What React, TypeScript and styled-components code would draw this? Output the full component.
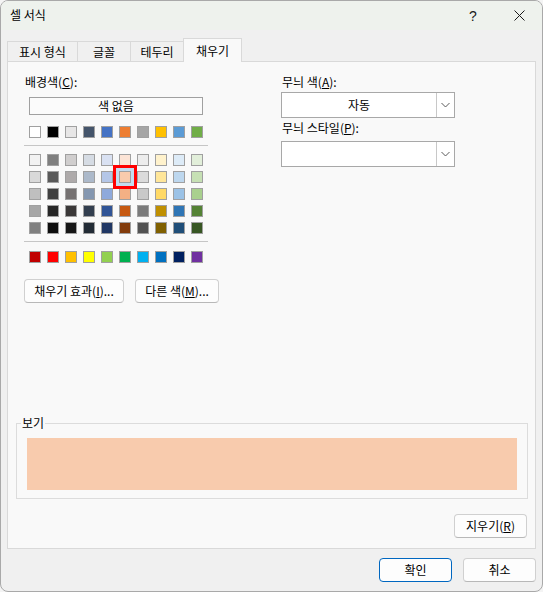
import React from "react";
import styled, { createGlobalStyle } from "styled-components";

const GlobalStyle = createGlobalStyle`
  html, body { margin: 0; padding: 0; background: #f4f4f4; }
  * { box-sizing: border-box; }
  body { font-family: "Noto Sans CJK KR", "Noto Sans", sans-serif; font-size: 12px; color: #000; }
`;

const Window = styled.div`
  width: 543px;
  height: 592px;
  border: 1px solid #a9a9a9;
  border-radius: 8px;
  overflow: hidden;
  background: #f0f0f0;
  display: flex;
  flex-direction: column;
`;

const TitleBar = styled.div`
  height: 29px;
  flex: none;
  display: flex;
  align-items: center;
  background: #eef2ed;
  padding-left: 9px;
`;

const Title = styled.div`
  flex: 1;
  font-size: 12px;
  line-height: 16px;
  padding-bottom: 1px;
`;

const CaptionButton = styled.div`
  width: 46px;
  height: 29px;
  display: flex;
  align-items: center;
  justify-content: center;
  font-family: "Liberation Sans", sans-serif;
  font-size: 14px;
  color: #1a1a1a;
`;

const Body = styled.div`
  flex: 1;
  display: flex;
  flex-direction: column;
  padding: 8px 6px 0 6px;
  min-height: 0;
`;

const TabStrip = styled.div`
  display: flex;
  align-items: flex-end;
  height: 24px;
  margin-bottom: -1px;
  position: relative;
  z-index: 1;
  flex: none;
`;

const Tab = styled.div<{ $w: number; $active?: boolean }>`
  width: ${(p) => p.$w}px;
  height: ${(p) => (p.$active ? 24 : 20)}px;
  margin-bottom: ${(p) => (p.$active ? 0 : 1)}px;
  margin-left: -1px;
  &:first-child { margin-left: 0; }
  border: 1px solid #d9d9d9;
  border-bottom: none;
  background: ${(p) => (p.$active ? "#f9f9f9" : "#f0f0f0")};
  position: relative;
  z-index: ${(p) => (p.$active ? 2 : 1)};
  display: flex;
  align-items: ${(p) => (p.$active ? "flex-start" : "center")};
  padding-top: ${(p) => (p.$active ? 4 : 0)}px;
  justify-content: center;
  font-size: 12px;
  line-height: 16px;
`;

const Panel = styled.div`
  flex: 1;
  background: #f9f9f9;
  border: 1px solid #d9d9d9;
  display: flex;
  flex-direction: column;
  padding: 12px 7px 10px 8px;
`;

const TopSection = styled.div`
  display: flex;
  gap: 73px;
  padding-left: 8px;
`;

const LeftColumn = styled.div`
  width: 184px;
  display: flex;
  flex-direction: column;
`;

const RightColumn = styled.div`
  width: 174px;
  display: flex;
  flex-direction: column;
`;

const Label = styled.div<{ $mt?: number }>`
  font-size: 12px;
  line-height: 16px;
  margin-top: ${(p) => p.$mt ?? 0}px;
  padding-left: 1px;
`;

const NoColorButton = styled.div`
  margin-top: 7px;
  margin-left: 5px;
  width: 174px;
  height: 18px;
  border: 1px solid #a0a0a0;
  background: #fbfbfb;
  display: flex;
  align-items: center;
  justify-content: center;
  font-size: 12px;
  line-height: 16px;
`;

const SwatchGrid = styled.div<{ $mt: number }>`
  margin-top: ${(p) => p.$mt}px;
  margin-left: 5px;
  display: grid;
  grid-template-columns: repeat(10, 12px);
  grid-auto-rows: 12px;
  column-gap: 6px;
  row-gap: 5px;
`;

const Swatch = styled.div<{ $color: string; $selected?: boolean }>`
  width: 12px;
  height: 12px;
  border: 1px solid #a0a0a0;
  background: ${(p) => p.$color};
  position: relative;
  z-index: ${(p) => (p.$selected ? 1 : 0)};
  box-shadow: ${(p) =>
    p.$selected ? "0 0 0 3px #c4dcf0, 0 0 0 6px #ff0000" : "none"};
`;

const Separator = styled.div<{ $mt: number }>`
  margin-top: ${(p) => p.$mt}px;
  height: 1px;
  background: #c6c6c6;
`;

const ButtonRow = styled.div`
  margin-top: 16px;
  display: flex;
  gap: 11px;
`;

const ActionButton = styled.div<{ $w: number; $primary?: boolean }>`
  width: ${(p) => p.$w}px;
  height: 24px;
  border: 1px solid ${(p) => (p.$primary ? "#0067c0" : "#d0d0d0")};
  border-bottom-color: ${(p) => (p.$primary ? "#0067c0" : "#b8b8b8")};
  border-radius: 4px;
  background: #fdfdfd;
  display: flex;
  align-items: center;
  justify-content: center;
  font-size: 12px;
  line-height: 16px;
  flex: none;
`;

const Select = styled.div<{ $mt: number }>`
  margin-top: ${(p) => p.$mt}px;
  height: 26px;
  border: 1px solid #a8a8a8;
  background: #ffffff;
  display: flex;
  align-items: stretch;
`;

const SelectValue = styled.div`
  flex: 1;
  display: flex;
  align-items: center;
  justify-content: center;
  font-size: 12px;
  line-height: 16px;
`;

const SelectArrow = styled.div`
  width: 18px;
  border-left: 1px solid #c8c8c8;
  display: flex;
  align-items: center;
  justify-content: center;
`;

const Preview = styled.fieldset`
  margin: auto 0 0 0;
  border: 1px solid #dcdcdc;
  padding: 7px 10px 8px 10px;
  min-width: 0;
`;

const PreviewLegend = styled.legend`
  font-size: 12px;
  line-height: 16px;
  padding: 0 1px;
  margin-left: -6px;
`;

const PreviewFill = styled.div<{ $color: string }>`
  height: 52px;
  background: ${(p) => p.$color};
`;

const ClearRow = styled.div`
  margin-top: 15px;
  display: flex;
  justify-content: flex-end;
  padding-right: 1px;
`;

const Footer = styled.div`
  height: 42px;
  flex: none;
  display: flex;
  justify-content: flex-end;
  align-items: flex-start;
  padding-top: 9px;
  gap: 11px;
`;

const themeRow = ["#FFFFFF", "#000000", "#E7E6E6", "#44546A", "#4472C4", "#ED7D31", "#A5A5A5", "#FFC000", "#5B9BD5", "#70AD47"];
const tints = [
  ["#F2F2F2", "#7F7F7F", "#D0CECE", "#D6DCE4", "#D9E1F2", "#FCE4D6", "#EDEDED", "#FFF2CC", "#DDEBF7", "#E2EFDA"],
  ["#D9D9D9", "#595959", "#AEAAAA", "#ACB9CA", "#B4C6E7", "#F8CBAD", "#DBDBDB", "#FFE699", "#BDD7EE", "#C6E0B4"],
  ["#BFBFBF", "#404040", "#757171", "#8497B0", "#8EA9DB", "#F4B084", "#C9C9C9", "#FFD966", "#9BC2E6", "#A9D08E"],
  ["#A6A6A6", "#262626", "#3A3838", "#333F4F", "#305496", "#C65911", "#7B7B7B", "#BF8F00", "#2F75B5", "#548235"],
  ["#808080", "#0D0D0D", "#161616", "#222B35", "#203764", "#833C0C", "#525252", "#806000", "#1F4E78", "#375623"],
];
const standard = ["#C00000", "#FF0000", "#FFC000", "#FFFF00", "#92D050", "#00B050", "#00B0F0", "#0070C0", "#002060", "#7030A0"];

const Chevron = () => (
  <svg width="9" height="6" viewBox="0 0 9 6">
    <path d="M0.5 1 L4.5 5 L8.5 1" fill="none" stroke="#5a5a5a" strokeWidth="1" />
  </svg>
);

const CloseIcon = () => (
  <svg width="11" height="11" viewBox="0 0 11 11">
    <path d="M0.5 0.5 L10.5 10.5 M10.5 0.5 L0.5 10.5" stroke="#1a1a1a" strokeWidth="1" />
  </svg>
);

export default function App() {
  return (
    <>
      <GlobalStyle />
      <Window>
        <TitleBar>
          <Title>셀 서식</Title>
          <CaptionButton>?</CaptionButton>
          <CaptionButton>
            <CloseIcon />
          </CaptionButton>
        </TitleBar>
        <Body>
          <TabStrip>
            <Tab $w={71}>표시 형식</Tab>
            <Tab $w={54}>글꼴</Tab>
            <Tab $w={54}>테두리</Tab>
            <Tab $w={59} $active>채우기</Tab>
          </TabStrip>
          <Panel>
            <TopSection>
              <LeftColumn>
                <Label>
                  배경색(<u>C</u>):
                </Label>
                <NoColorButton>색 없음</NoColorButton>
                <SwatchGrid $mt={11}>
                  {themeRow.map((c, i) => (
                    <Swatch key={i} $color={c} />
                  ))}
                </SwatchGrid>
                <Separator $mt={7} />
                <SwatchGrid $mt={8}>
                  {tints.flatMap((row, r) =>
                    row.map((c, i) => (
                      <Swatch key={`${r}-${i}`} $color={c} $selected={r === 1 && i === 5} />
                    ))
                  )}
                </SwatchGrid>
                <Separator $mt={7} />
                <SwatchGrid $mt={9}>
                  {standard.map((c, i) => (
                    <Swatch key={i} $color={c} />
                  ))}
                </SwatchGrid>
                <ButtonRow>
                  <ActionButton $w={100}>
                    채우기 효과(<u>I</u>)...
                  </ActionButton>
                  <ActionButton $w={84}>
                    다른 색(<u>M</u>)...
                  </ActionButton>
                </ButtonRow>
              </LeftColumn>
              <RightColumn>
                <Label>
                  무늬 색(<u>A</u>):
                </Label>
                <Select $mt={2}>
                  <SelectValue>자동</SelectValue>
                  <SelectArrow>
                    <Chevron />
                  </SelectArrow>
                </Select>
                <Label $mt={2}>
                  무늬 스타일(<u>P</u>):
                </Label>
                <Select $mt={5}>
                  <SelectValue />
                  <SelectArrow>
                    <Chevron />
                  </SelectArrow>
                </Select>
              </RightColumn>
            </TopSection>
            <Preview>
              <PreviewLegend>보기</PreviewLegend>
              <PreviewFill $color="#F8CBAD" />
            </Preview>
            <ClearRow>
              <ActionButton $w={73}>
                지우기(<u>R</u>)
              </ActionButton>
            </ClearRow>
          </Panel>
          <Footer>
            <ActionButton $w={73} $primary>
              확인
            </ActionButton>
            <ActionButton $w={73}>취소</ActionButton>
          </Footer>
        </Body>
      </Window>
    </>
  );
}
